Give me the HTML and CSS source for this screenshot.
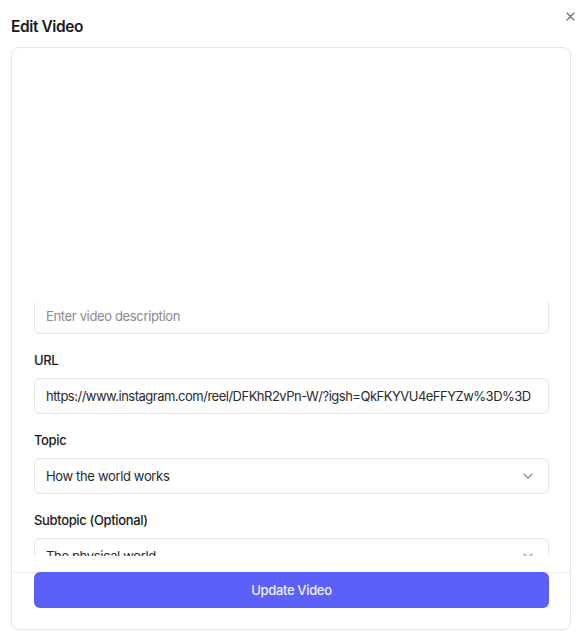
FILE: index.html
```html
<!DOCTYPE html>
<html lang="en">
<head>
<meta charset="utf-8">
<title>Edit Video</title>
<link rel="stylesheet" href="styles.css">
</head>
<body>
<div class="dialog">
  <header class="dialog-header">
    <h1 class="dialog-title">Edit Video</h1>
    <button class="close-btn" aria-label="Close">
      <svg width="9" height="9" viewBox="0 0 9 9"><path d="M1 1L8 8M8 1L1 8" stroke="#6b6b6b" stroke-width="1.2" stroke-linecap="round"/></svg>
    </button>
  </header>
  <div class="card">
    <div class="preview"></div>
    <div class="scroll">
      <div class="scroll-inner">
        <div class="input placeholder">Enter video description</div>
        <label class="label">URL</label>
        <div class="input url">https://www.instagram.com/reel/DFKhR2vPn-W/?igsh=QkFKYVU4eFFYZw%3D%3D</div>
        <label class="label">Topic</label>
        <div class="input select">
          <span>How the world works</span>
          <svg class="chev" width="10" height="6" viewBox="0 0 10 6"><path d="M1 1L5 5L9 1" fill="none" stroke="#8a8a8a" stroke-width="1.1" stroke-linecap="round" stroke-linejoin="round"/></svg>
        </div>
        <label class="label">Subtopic (Optional)</label>
        <div class="input select">
          <span>The physical world</span>
          <svg class="chev" width="10" height="6" viewBox="0 0 10 6"><path d="M1 1L5 5L9 1" fill="none" stroke="#8a8a8a" stroke-width="1.1" stroke-linecap="round" stroke-linejoin="round"/></svg>
        </div>
      </div>
    </div>
    <div class="footer">
      <button class="primary">Update Video</button>
    </div>
  </div>
</div>
</body>
</html>
```

FILE: styles.css
```css
* { box-sizing: border-box; }
html, body { margin: 0; padding: 0; background: #ffffff; }
body {
  font-family: Inter, "Noto Sans", "Liberation Sans", sans-serif;
  color: #1c1c1c;
  width: 585px;
  height: 636px;
  overflow: hidden;
  letter-spacing: -0.35px;
}
.dialog { padding: 0 0 0 11px; }
.dialog-header {
  display: flex;
  justify-content: space-between;
  align-items: flex-start;
  height: 47px;
}
.dialog-title {
  margin: 15px 0 0 0;
  font-size: 15.5px;
  line-height: 24px;
  font-weight: 600;
  color: #1a1a1a;
  letter-spacing: -0.4px;
}
.close-btn {
  border: 0;
  background: none;
  padding: 0;
  margin: 12px 10px 0 0;
  width: 9px;
  height: 9px;
  display: flex;
}
.card {
  width: 560px;
  height: 583px;
  border: 1px solid #e6e6e6;
  border-radius: 8px;
  box-shadow: 0 1px 2px rgba(0,0,0,0.04);
  display: flex;
  flex-direction: column;
}
.preview { height: 254px; flex: none; }
.scroll {
  height: 254px;
  overflow: hidden;
  padding: 0 21px 0 22px;
  flex: none;
}
.scroll-inner { margin-top: -4px; }
.input {
  height: 36px;
  border: 1px solid #e5e5e5;
  border-radius: 6px;
  padding: 0 11px;
  display: flex;
  align-items: center;
  font-size: 13px;
  color: #2a2a2a;
  white-space: nowrap;
  overflow: hidden;
}
.url { letter-spacing: -0.5px; }
.placeholder { color: #8a8a8a; }
.select { justify-content: space-between; }
.chev { margin-right: 4px; flex: none; }
.label {
  display: block;
  margin: 16px 0 8px;
  height: 20px;
  line-height: 20px;
  font-size: 13px;
  font-weight: 500;
  color: #1a1a1a;
}
.footer {
  margin-top: 16px;
  border-top: 1px solid #ececec;
  padding: 0 21px 0 22px;
}
.primary {
  display: block;
  width: 100%;
  height: 36px;
  margin-top: -1px;
  border: 0;
  border-radius: 6px;
  background: #5a60f8;
  color: #eef0ff;
  font-family: Inter, "Noto Sans", "Liberation Sans", sans-serif;
  font-size: 13px;
  font-weight: 500;
  letter-spacing: -0.35px;
}
```
